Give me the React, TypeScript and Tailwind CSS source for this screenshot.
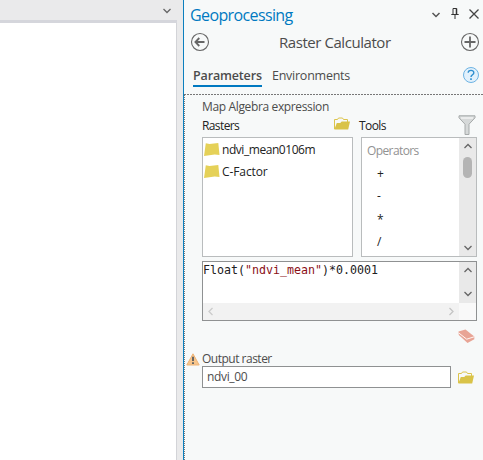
import React from "react";

type ChevronProps = { dir: "up" | "down" | "left" | "right"; color?: string };

const chevronPaths = {
  up: "M1.5 6 5 2.5 8.5 6",
  down: "M1.5 3 5 6.5 8.5 3",
  left: "M6.5 1 3 4.5 6.5 8",
  right: "M3.5 1 7 4.5 3.5 8",
};

function Chevron({ dir, color = "#666" }: ChevronProps) {
  return (
    <svg width="10" height="9" viewBox="0 0 10 9" fill="none" stroke={color} strokeWidth="1.3" className="shrink-0">
      <path d={chevronPaths[dir]} />
    </svg>
  );
}

function Folder() {
  return (
    <svg width="16" height="13" viewBox="0 0 16 13" className="shrink-0">
      <path d="M.5 12V2.5h3L4.5 1h4l1 1.5h4V5" fill="none" stroke="#dcc44c" />
      <path d="M.3 12.5 2.8 6h3.4l1.5-1.4H16L14.2 12.5z" fill="#d9c348" />
    </svg>
  );
}

function RasterItem({ label, className }: { label: string; className: string }) {
  return (
    <div className="flex h-[22px] items-center gap-[2px]">
      <svg width="17" height="15" viewBox="0 0 17 15">
        <path d="M2.8 1.3 6.5 2 15.3 1l1.2 12-4.8-.6L1 14z" fill="#e5d158" />
      </svg>
      <span className={className}>{label}</span>
    </div>
  );
}

function LeftView() {
  return (
    <div className="flex w-[183px] flex-col bg-[#eaeaeb]">
      <div className="flex h-[20px] items-center justify-end pr-[11px]">
        <Chevron dir="down" color="#666" />
      </div>
      <div className="h-[3px] w-[177px] bg-[#d5d6dc]" />
      <div className="w-[177px] flex-1 border-r border-[#d3d4d8] bg-white" />
    </div>
  );
}

function PaneHeader() {
  return (
    <div className="h-[94px]">
      <div className="flex h-[28px] items-center pl-[6px]">
        <span className="mt-[1px] w-[240px] text-[16px] tracking-[-0.62px] text-[#0079c1]">Geoprocessing</span>
        <svg width="10" height="9" viewBox="0 0 10 9" fill="none" stroke="#555" strokeWidth="1.5" className="ml-[1px]">
          <path d="M1.5 3 5 6.5 8.5 3" />
        </svg>
        <svg width="8" height="11" viewBox="0 0 8 11" fill="none" stroke="#333" className="ml-[10px] mt-[-2px]">
          <path d="M2 7V.5h3.5V7M.3 6.5h7.4M4 7v4" />
          <path d="M5.5.5V7" strokeWidth="1.5" />
        </svg>
        <svg width="10" height="10" viewBox="0 0 10 10" stroke="#444" strokeWidth="1.3" className="ml-[10px]">
          <path d="m.5.5 9 9m0-9-9 9" />
        </svg>
      </div>
      <div className="flex h-[28px] items-center pl-[6px]">
        <svg width="20" height="20" viewBox="0 0 20 20" fill="none" stroke="#666">
          <circle cx="10" cy="10" r="8.5" strokeWidth="1.1" />
          <path d="M5.5 10h9M9.3 6 5.4 10l3.9 4" strokeWidth="1.8" />
        </svg>
        <span className="ml-[69px] w-[181px] text-[15px] tracking-[-0.44px] text-[#4c4c4c]">Raster Calculator</span>
        <svg width="20" height="20" viewBox="0 0 20 20" fill="none" stroke="#666">
          <circle cx="10" cy="10" r="8.5" strokeWidth="1.1" />
          <path d="M4.5 10h11M10 4.5v11" strokeWidth="1.8" />
        </svg>
      </div>
      <div className="flex pl-[9px] pt-[9px]">
        <div className="h-[22px] w-[69px] border-b-2 border-[#0079c1] text-[12.5px] leading-[21px] font-semibold tracking-[-0.15px] text-[#4c4c4c]">
          Parameters
        </div>
        <span className="ml-[10px] w-[190px] text-[12.5px] leading-[21px] tracking-[-0.25px] text-[#4c4c4c]">Environments</span>
        <svg width="18" height="18" viewBox="0 0 18 18" fill="none" className="mt-[1px]">
          <circle cx="9" cy="9" r="7.5" fill="#e2f1fc" stroke="#6db3e3" />
          <path d="M6.2 6.8C6.2 3.4 12 3.6 11.8 7c-.1 1.7-2.8 1.9-2.8 4" stroke="#2f8fd0" strokeWidth="1.4" />
          <path d="M8.2 12.3h1.6v1.6H8.2z" fill="#2f8fd0" />
        </svg>
      </div>
    </div>
  );
}

function ToolsList() {
  return (
    <div className="flex h-[120px] w-[116px] border border-[#b9bcbd] bg-white text-[12px]">
      <div className="flex-1 pl-[5px]">
        <div className="h-[24px] leading-[25px] tracking-[-0.6px] text-[#929292]">Operators</div>
        <div className="pl-[10px] text-[#222]">
          <div className="h-[23px] leading-[23px]">+</div>
          <div className="h-[22px] leading-[22px]">-</div>
          <div className="h-[23px] leading-[25px]">*</div>
          <div className="h-[23px] leading-[24px]">/</div>
        </div>
      </div>
      <div className="flex w-[17px] flex-col items-center justify-between bg-[#e9e9e9] pt-[4px] pb-[4px]">
        <div className="flex flex-col items-center gap-[6px]">
          <Chevron dir="up" />
          <div className="h-[21px] w-[9px] rounded-full bg-[#b4b4b4]" />
        </div>
        <Chevron dir="down" />
      </div>
    </div>
  );
}

function Expression() {
  return (
    <div className="mt-[4px] flex h-[60px] w-[275px] flex-col border border-[#8f9192] bg-white">
      <div className="flex h-[41px]">
        <div className="flex-1 whitespace-pre pt-[1px] font-['DejaVu_Sans_Mono',monospace] text-[11.63px] leading-[15px] text-[#202020]">
          Float(<span className="text-[#8b1016]">"ndvi_mean"</span>)*0.0001
        </div>
        <div className="flex w-[17px] flex-col items-center justify-between bg-[#e9e9e9] pt-[4px] pb-[5px]">
          <Chevron dir="up" />
          <Chevron dir="down" />
        </div>
      </div>
      <div className="flex h-[17px] bg-[#f9f9f9]">
        <div className="flex w-[256px] items-center justify-between bg-[#f2f2f2] px-[3px]">
          <Chevron dir="left" color="#ccc" />
          <Chevron dir="right" color="#c4c4c4" />
        </div>
      </div>
    </div>
  );
}

export default function App() {
  return (
    <div className="flex h-[460px] w-[483px] overflow-hidden bg-[#f7f9f9] font-['Open_Sans','Noto_Sans',sans-serif]">
      <LeftView />
      <div className="w-px bg-[#0c80bf]" />
      <div className="flex flex-1 flex-col whitespace-nowrap">
        <PaneHeader />
        <div className="h-px bg-[repeating-linear-gradient(90deg,#777_0_2px,transparent_2px_3px)]" />
        <div className="flex flex-1">
          <div className="w-px bg-[repeating-linear-gradient(180deg,#777_0_1px,transparent_1px_2px)]" />
          <div className="flex-1 pl-[17px] text-[12px] text-[#4c4c4c]">
            <div className="h-[22px] leading-[23px] tracking-[-0.36px]">Map Algebra expression</div>
            <div className="flex h-[20px] text-[#222]">
              <span className="w-[132px] leading-[17px] tracking-[-0.6px]">Rasters</span>
              <Folder />
              <span className="ml-[9px] w-[99px] leading-[17px] tracking-[-0.6px]">Tools</span>
              <svg width="18" height="21" viewBox="0 0 18 21" fill="#d6d9d9" stroke="#a6aaaa" className="mt-[-2px]">
                <path d="M1 .8h16v2l-6 6.4v10.3H7V9.2L1 2.8z" />
                <path d="M3 3h12" stroke="#fff" />
              </svg>
            </div>
            <div className="flex gap-[8px]">
              <div className="h-[120px] w-[151px] border border-[#b9bcbd] bg-white text-[#222]">
                <RasterItem label="ndvi_mean0106m" className="pt-[1px] tracking-[-0.45px]" />
                <RasterItem label="C-Factor" className="pt-[1px] tracking-[-0.1px]" />
              </div>
              <ToolsList />
            </div>
            <Expression />
            <div className="flex h-[30px] justify-end pt-[8px] pr-[8px]">
              <svg width="17" height="15" viewBox="0 0 17 15">
                <path d="M.5 2.5 7.5.5l8.8 7v2.8L9.5 14 .8 6z" fill="#e8a495" />
                <path d="m.8 4 7.9 6.2 7.5-2.4" stroke="#fff5f2" strokeWidth="1" fill="none" />
              </svg>
            </div>
            <div className="ml-[-16px] flex h-[15px] items-center">
              <svg width="14" height="13" viewBox="0 0 14 13" className="mr-[2px] mt-[1px]">
                <path d="M7 .8 13.2 12H.8z" fill="#f7c58b" stroke="#edb377" strokeLinejoin="round" />
                <path d="M7 3.8v4.3M7 9.2V11" stroke="#666" strokeWidth="2" />
              </svg>
              <span className="pt-[1px] tracking-[-0.5px]">Output raster</span>
            </div>
            <div className="flex items-center gap-[7px]">
              <div className="h-[22px] w-[249px] border border-[#8f9192] bg-white pl-[4px] leading-[20px] tracking-[-0.35px]">ndvi_00</div>
              <Folder />
            </div>
          </div>
        </div>
      </div>
    </div>
  );
}
